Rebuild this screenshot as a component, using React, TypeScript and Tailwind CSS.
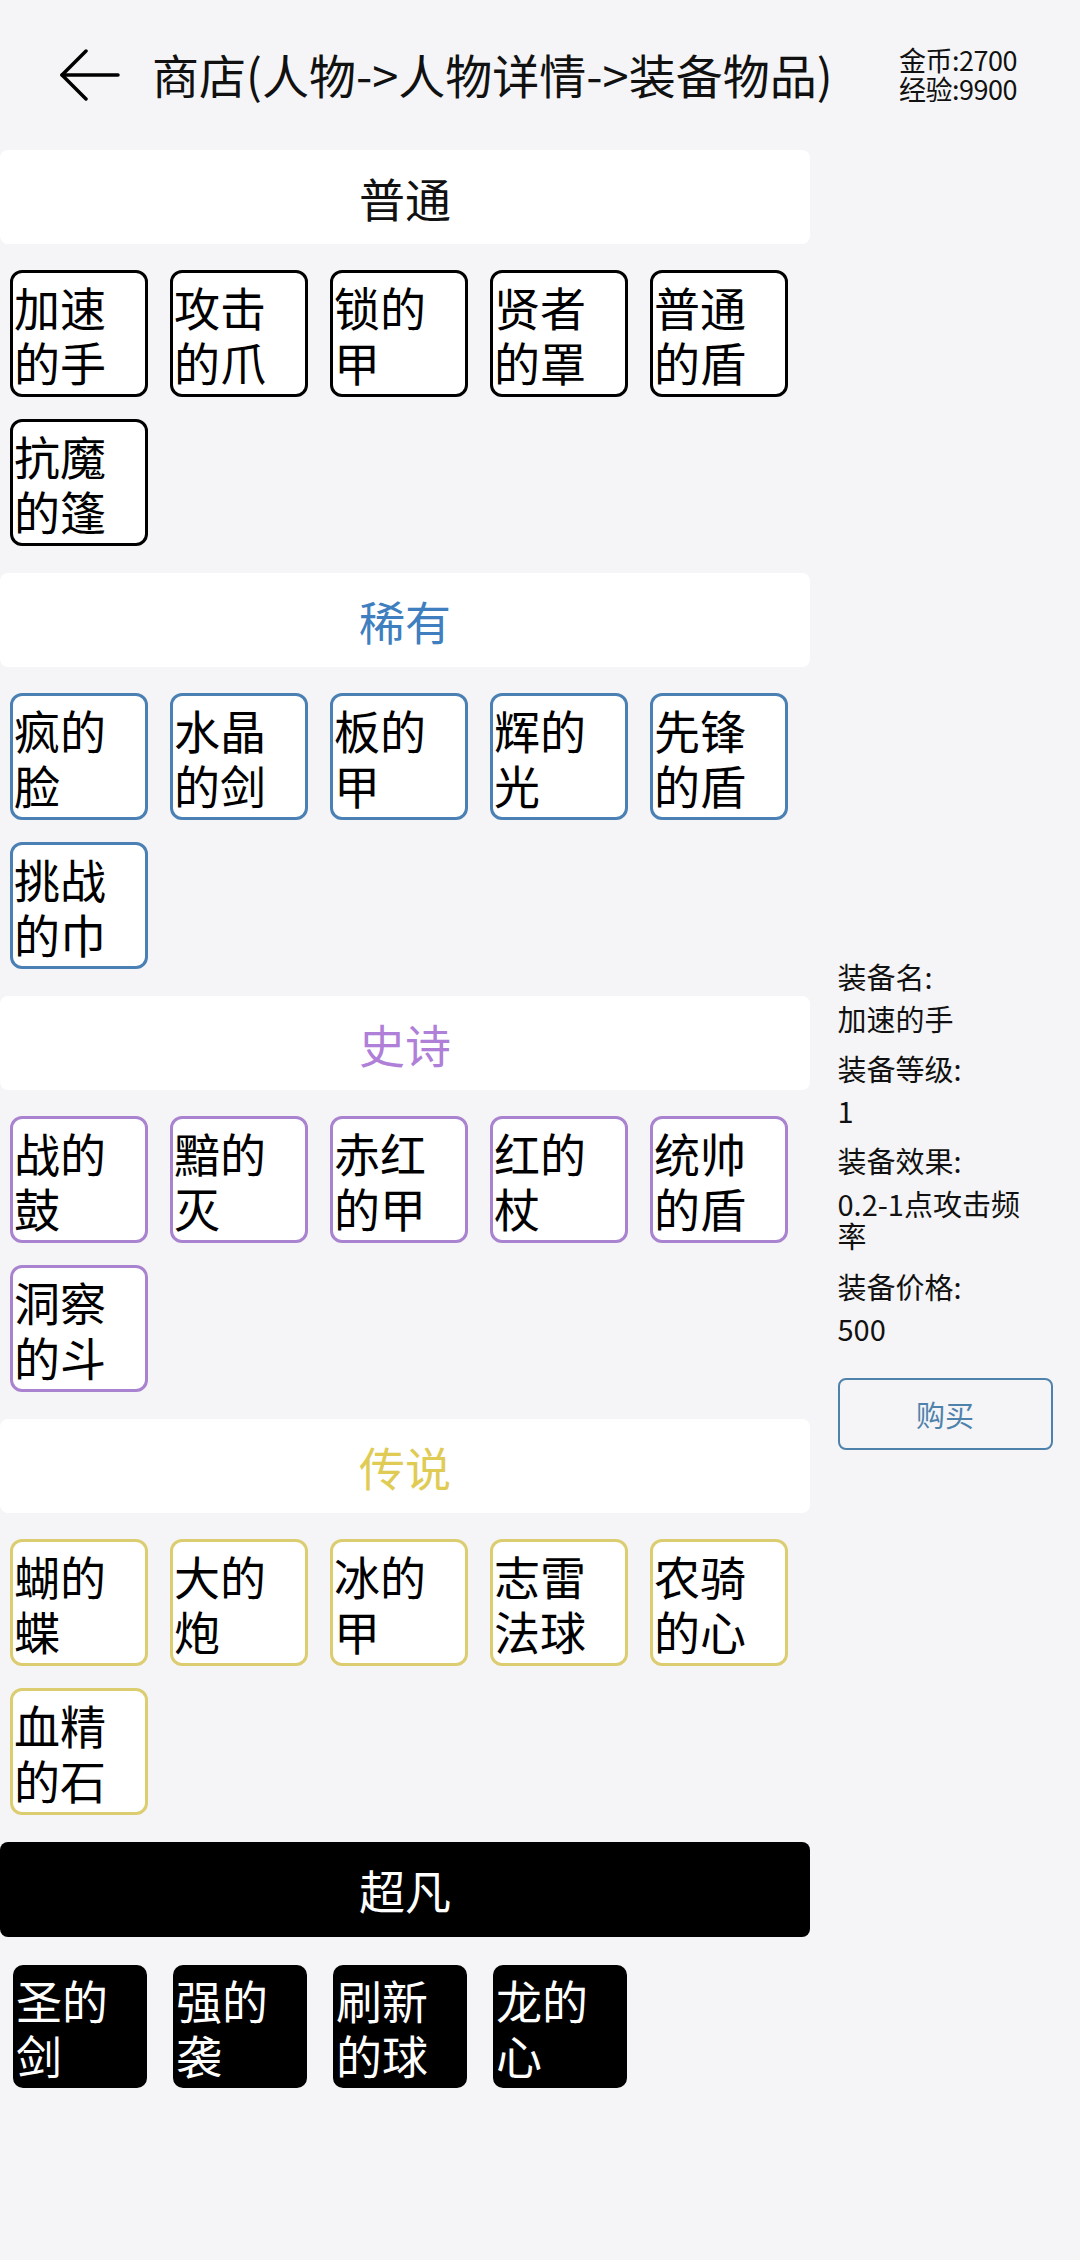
const font = { fontFamily: '"Noto Sans CJK SC", "Noto Sans", sans-serif' };

type Tier = {
  name: string;
  head: string;
  item: string;
  items: string[][];
};

const tiers: Tier[] = [
  {
    name: "普通",
    head: "bg-white text-[#111]",
    item: "bg-white border-[3px] border-black text-black",
    items: [["加速", "的手"], ["攻击", "的爪"], ["锁的", "甲"], ["贤者", "的罩"], ["普通", "的盾"], ["抗魔", "的篷"]],
  },
  {
    name: "稀有",
    head: "bg-white text-[#3f7fc0]",
    item: "bg-white border-[3px] border-[#4a80b4] text-black",
    items: [["疯的", "脸"], ["水晶", "的剑"], ["板的", "甲"], ["辉的", "光"], ["先锋", "的盾"], ["挑战", "的巾"]],
  },
  {
    name: "史诗",
    head: "bg-white text-[#b07fd8]",
    item: "bg-white border-[3px] border-[#a983cf] text-black",
    items: [["战的", "鼓"], ["黯的", "灭"], ["赤红", "的甲"], ["红的", "杖"], ["统帅", "的盾"], ["洞察", "的斗"]],
  },
  {
    name: "传说",
    head: "bg-white text-[#e0cb55]",
    item: "bg-white border-[3px] border-[#dccd70] text-black",
    items: [["蝴的", "蝶"], ["大的", "炮"], ["冰的", "甲"], ["志雷", "法球"], ["农骑", "的心"], ["血精", "的石"]],
  },
];

const mythic = [["圣的", "剑"], ["强的", "袭"], ["刷新", "的球"], ["龙的", "心"]];

function Section({ tier }: { tier: Tier }) {
  return (
    <div className="flex flex-col pb-[27px]">
      <div className={`h-[94px] rounded-[8px] flex items-center justify-center text-[46px] ${tier.head}`}>
        {tier.name}
      </div>
      <div className="mt-[26px] pl-[10px] flex flex-wrap gap-x-[22px] gap-y-[22px]">
        {tier.items.map((it, i) => (
          <div
            key={i}
            className={`w-[138px] h-[127px] rounded-[12px] flex flex-col justify-center pl-[1px] text-[46px] leading-[55px] ${tier.item}`}
          >
            <span>{it[0]}</span>
            <span>{it[1]}</span>
          </div>
        ))}
      </div>
    </div>
  );
}

export default function App() {
  return (
    <div className="w-[1080px] h-[2260px] bg-[#f5f5f7] flex flex-col" style={font}>
      <div className="h-[150px] flex items-center shrink-0">
        <div className="w-[152px] pl-[60px] flex items-center">
          <svg width="60" height="52" viewBox="0 0 60 52" fill="none" stroke="black" strokeWidth="3.5" strokeLinecap="round" strokeLinejoin="round">
            <path d="M58 26 H2" />
            <path d="M26 2 L2 26 L26 50" />
          </svg>
        </div>
        <div className="flex-1 text-[47px] leading-none text-[#111] -mt-[4px]">商店(人物-&gt;人物详情-&gt;装备物品)</div>
        <div className="w-[181px] text-[27px] leading-[29px] text-[#111] tracking-[-0.5px] -mt-[2px]">
          <div>金币:2700</div>
          <div>经验:9900</div>
        </div>
      </div>
      <div className="flex-1 flex">
        <div className="w-[810px] flex flex-col">
          {tiers.map((t) => (
            <Section key={t.name} tier={t} />
          ))}
          <div className="flex flex-col">
            <div className="h-[95px] rounded-[8px] bg-black text-white flex items-center justify-center text-[46px]">超凡</div>
            <div className="mt-[28px] pl-[13px] flex gap-[26px]">
              {mythic.map((it, i) => (
                <div
                  key={i}
                  className="w-[134px] h-[123px] rounded-[10px] bg-black text-white flex flex-col justify-center pl-[3px] text-[46px] leading-[55px]"
                >
                  <span>{it[0]}</span>
                  <span>{it[1]}</span>
                </div>
              ))}
            </div>
          </div>
        </div>
        <div className="flex-1 flex items-center justify-center">
          <div className="w-[215px] flex flex-col text-[29px] leading-[30px] text-[#111]">
            <div>装备名:</div>
            <div className="mt-[12px]">加速的手</div>
            <div className="mt-[20px]">装备等级:</div>
            <div className="mt-[12px]">1</div>
            <div className="mt-[20px]">装备效果:</div>
            <div className="mt-[12px] leading-[32px] w-[200px]">0.2-1点攻击频率</div>
            <div className="mt-[20px]">装备价格:</div>
            <div className="mt-[12px]">500</div>
            <button className="mt-[35px] h-[72px] w-full rounded-[8px] border-2 border-[#4f82ab] text-[#4f82ab] text-[29px] bg-transparent">
              购买
            </button>
          </div>
        </div>
      </div>
    </div>
  );
}
